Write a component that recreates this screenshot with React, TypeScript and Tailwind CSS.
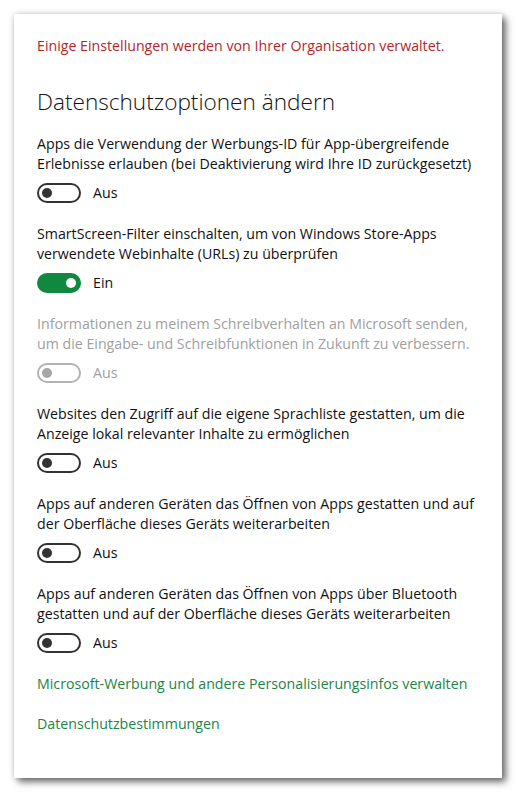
import React from "react";

type ToggleState = "off" | "on" | "disabled";

function Toggle({ state }: { state: ToggleState }) {
  if (state === "on") {
    return (
      <div className="w-[44px] h-[20px] rounded-full bg-[#10893e] flex items-center justify-end pr-[5px]">
        <div className="w-[10px] h-[10px] rounded-full bg-white" />
      </div>
    );
  }
  const border = state === "disabled" ? "border-[#b3b3b3]" : "border-[#333333]";
  const knob = state === "disabled" ? "bg-[#a6a6a6]" : "bg-[#333333]";
  return (
    <div className={`w-[44px] h-[20px] rounded-full border-2 ${border} flex items-center pl-[3px]`}>
      <div className={`w-[10px] h-[10px] rounded-full ${knob}`} />
    </div>
  );
}

function Setting({
  lines,
  state,
}: {
  lines: string[];
  state: ToggleState;
}) {
  const disabled = state === "disabled";
  return (
    <div className="flex flex-col">
      <div className={`text-[14.2px] leading-[20px] ${disabled ? "text-[#a0a0a0]" : "text-[#111111]"}`}>
        {lines.map((l, i) => (
          <div key={i} className="whitespace-nowrap">
            {l}
          </div>
        ))}
      </div>
      <div className="flex items-center gap-[12px] mt-[9px] h-[20px]">
        <Toggle state={state} />
        <span className={`text-[14.2px] leading-[20px] ${disabled ? "text-[#a0a0a0]" : "text-[#111111]"}`}>
          {state === "on" ? "Ein" : "Aus"}
        </span>
      </div>
    </div>
  );
}

export default function App() {
  const settings: { lines: string[]; state: ToggleState }[] = [
    {
      lines: [
        "Apps die Verwendung der Werbungs-ID für App-übergreifende",
        "Erlebnisse erlauben (bei Deaktivierung wird Ihre ID zurückgesetzt)",
      ],
      state: "off",
    },
    {
      lines: [
        "SmartScreen-Filter einschalten, um von Windows Store-Apps",
        "verwendete Webinhalte (URLs) zu überprüfen",
      ],
      state: "on",
    },
    {
      lines: [
        "Informationen zu meinem Schreibverhalten an Microsoft senden,",
        "um die Eingabe- und Schreibfunktionen in Zukunft zu verbessern.",
      ],
      state: "disabled",
    },
    {
      lines: [
        "Websites den Zugriff auf die eigene Sprachliste gestatten, um die",
        "Anzeige lokal relevanter Inhalte zu ermöglichen",
      ],
      state: "off",
    },
    {
      lines: [
        "Apps auf anderen Geräten das Öffnen von Apps gestatten und auf",
        "der Oberfläche dieses Geräts weiterarbeiten",
      ],
      state: "off",
    },
    {
      lines: [
        "Apps auf anderen Geräten das Öffnen von Apps über Bluetooth",
        "gestatten und auf der Oberfläche dieses Geräts weiterarbeiten",
      ],
      state: "off",
    },
  ];

  return (
    <div
      className="w-[518px] h-[794px] bg-white pt-[14px] pl-[14px]"
      style={{ fontFamily: '"Segoe UI", "Open Sans", "Noto Sans", sans-serif' }}
    >
      <div className="w-[488px] h-[764px] bg-white shadow-[4px_4px_7px_rgba(0,0,0,0.55),0_0_6px_rgba(0,0,0,0.18)] pl-[23px] pt-[22px] flex flex-col">
        <div className="text-[14.2px] leading-[20px] text-[#b5262b] whitespace-nowrap">
          Einige Einstellungen werden von Ihrer Organisation verwaltet.
        </div>
        <h1 className="mt-[31px] text-[22.6px] leading-[30px] font-light text-[#111111] whitespace-nowrap">
          Datenschutzoptionen ändern
        </h1>
        <div className="mt-[17px] flex flex-col gap-[21px]">
          {settings.map((s, i) => (
            <Setting key={i} lines={s.lines} state={s.state} />
          ))}
        </div>
        <div className="mt-[21px] flex flex-col gap-[20px] text-[14.2px] leading-[20px] text-[#1a8548] ">
          <div className="whitespace-nowrap">Microsoft-Werbung und andere Personalisierungsinfos verwalten</div>
          <div className="whitespace-nowrap">Datenschutzbestimmungen</div>
        </div>
      </div>
    </div>
  );
}
